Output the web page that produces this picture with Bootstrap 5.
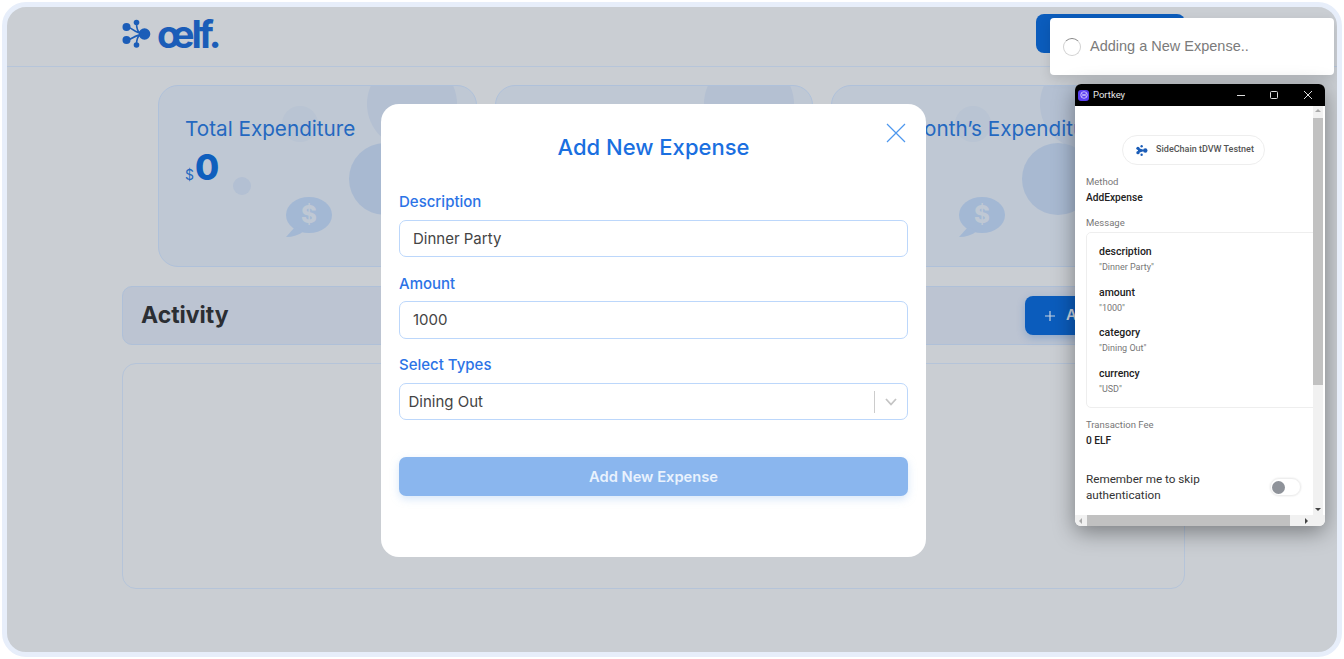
<!DOCTYPE html>
<html lang="en">
<head>
    <meta charset="UTF-8">
    <meta name="viewport" content="width=device-width, initial-scale=1.0">
    <title>Expense Tracker</title>
    <link href="https://cdn.jsdelivr.net/npm/bootstrap@5.3.2/dist/css/bootstrap.min.css" rel="stylesheet">
    <style>
        html, body { height: 100%; overflow: hidden; background: #fff; }
        body { font-family: Inter, "Noto Sans", sans-serif; }

        .app-frame {
            position: relative;
            margin: 2px;
            height: 655px;
            border: 5px solid #e7eefa;
            border-radius: 24px;
            background: #caced3;
            overflow: hidden;
        }
        .top-bar {
            height: 60px;
            padding: 0 152px 6px 114px;
            border-bottom: 1px solid #b6c5da;
        }
        .brand-logo { color: #1b5db8; }
        .brand-text {
            font-size: 38px;
            font-weight: 700;
            letter-spacing: -3px;
            line-height: 40px;
        }
        .top-btn {
            width: 149px;
            height: 39px;
            background: #0b5cbc;
            border-radius: 8px;
            border: 0;
        }
        .page-wrap { margin: 18px 152px 0 115px; }

        .stat-row { padding: 0 37px 0 36px; gap: 18px; }
        .stat-card {
            position: relative;
            flex: 0 0 318.5px;
            height: 182px;
            padding: 28px 26px;
            background: #bfc8d4;
            border: 1px solid #afc1da;
            border-radius: 20px;
            overflow: hidden;
        }
        .stat-title {
            position: relative;
            font-size: 20.7px;
            line-height: 30px;
            color: #2468c0;
        }
        .stat-value { position: relative; color: #0f5fbd; font-size: 35px; font-weight: 800; line-height: 46px; }
        .stat-value span { font-size: 14px; font-weight: 400; color: #2468c0; margin-right: 1px; }
        .blob { position: absolute; border-radius: 50%; }
        .blob-top { left: 208px; top: -27px; width: 90px; height: 90px; background: #b4c0d2; }
        .blob-big { left: 190px; top: 57px; width: 72px; height: 72px; background: #a8b9d1; }
        .blob-mid { left: 123px; top: 20px; width: 36px; height: 36px; background: #b9c4d3; }
        .blob-dot { left: 74px; top: 91px; width: 18px; height: 18px; background: #b3c0d3; }
        .bubble { position: absolute; left: 126px; top: 111px; }

        .activity-bar {
            height: 59px;
            margin-top: 19px;
            padding: 0 10px 0 18px;
            background: #bcc4d2;
            border: 1px solid #afc0d8;
            border-radius: 10px;
        }
        .activity-title { font-size: 23px; font-weight: 700; color: #2b2e33; }
        .add-btn {
            width: 149px;
            height: 39px;
            padding: 0 0 0 20px;
            gap: 11px;
            background: #0b5cbc;
            border: 0;
            border-radius: 8px;
            color: #c9d3e0;
            font-size: 15px;
            font-weight: 600;
            white-space: nowrap;
            box-shadow: 0 3px 8px rgba(11, 92, 188, .25);
        }
        .add-btn > * { flex-shrink: 0; }
        .activity-table {
            height: 226px;
            margin-top: 18px;
            border: 1px solid #b5c4d9;
            border-radius: 14px;
        }

        /* modal sits on the dimmed page */
        .expense-modal {
            position: absolute;
            left: 374px;
            top: 97px;
            width: 545px;
            height: 453px;
            padding: 25px 18px 0;
            background: #fff;
            border: 0;
            border-radius: 18px;
        }
        .modal-heading {
            margin: 0 0 26px;
            font-size: 22px;
            font-weight: 500;
            line-height: 36px;
            text-align: center;
            color: #1a6fe0;
        }
        .modal-x { position: absolute; right: 20px; top: 19px; background: none; border: 0; padding: 0; line-height: 0; }
        .field-label {
            display: block;
            margin-bottom: 6.5px;
            font-size: 15px;
            font-weight: 500;
            line-height: 22px;
            color: #2c73e6;
        }
        .field-box {
            height: 37.5px;
            margin-bottom: 15.5px;
            padding: 1px 13px 0;
            border: 1.5px solid #bcd7fb;
            border-radius: 7px;
            font-size: 15px;
            color: #444;
        }
        .select-box { padding: 1px 10px 0 8.5px; margin-bottom: 0; }
        .select-sep { width: 1px; height: 22px; background: #ccc; margin-right: 10px; }
        .submit-btn {
            width: 100%;
            height: 39px;
            margin-top: 37px;
            padding-top: 2px;
            background: #8ab6ee;
            border: 0;
            border-radius: 7px;
            color: #e9f2fd;
            font-size: 14.7px;
            font-weight: 600;
            box-shadow: 0 3px 8px rgba(138, 182, 238, .35);
        }

        .busy-toast {
            position: absolute;
            left: 1043px;
            top: 11px;
            width: 284px;
            height: 57px;
            padding-left: 13px;
            gap: 9px;
            background: #fff;
            border-radius: 4px;
            box-shadow: 0 4px 12px rgba(0, 0, 0, .12);
            font-family: "Liberation Sans", sans-serif;
            font-size: 14.5px;
            color: #7b7b7b;
        }
        .busy-toast span { padding-top: 1px; }
        .busy-spin {
            width: 18px;
            height: 18px;
            border: 1.5px solid #d2d2d2;
            border-top-color: #858585;
            border-radius: 50%;
        }

        .wallet-win {
            position: absolute;
            left: 1068px;
            top: 77px;
            width: 250px;
            height: 442px;
            background: #fff;
            border-radius: 6px;
            overflow: hidden;
            box-shadow: 0 6px 22px rgba(0, 0, 0, .4);
            font-family: Roboto, sans-serif;
        }
        .win-title {
            height: 22px;
            padding: 0 12px 0 3px;
            background: #000;
            color: #e8e8e8;
            font-size: 9.5px;
        }
        .win-icon { width: 11px; height: 11px; margin-right: 4px; border-radius: 3px; background: #5b3ff0; }
        .win-body { height: 409px; }
        .win-content { width: 238px; padding: 0 0 0 11px; overflow: hidden; }
        .chain-pill {
            width: 143px;
            height: 30px;
            margin: 29px 0 0 36px;
            padding-left: 3px;
            gap: 8px;
            border: 1px solid #eee;
            border-radius: 15px;
            font-size: 9px;
            font-weight: 500;
            color: #555;
            white-space: nowrap;
        }
        .meta-key { font-size: 9.5px; line-height: 12px; color: #777; }
        .meta-val { font-size: 10.2px; font-weight: 500; line-height: 14px; color: #222; margin-top: 3px; }
        .msg-box {
            width: 240px;
            height: 176px;
            margin-top: 3px;
            padding: 12px 12px;
            border: 1px solid #eee;
            border-radius: 5px;
        }
        .msg-key { font-size: 10.5px; font-weight: 500; line-height: 14px; color: #222; }
        .msg-val { font-size: 9px; line-height: 12px; margin: 2px 0 12.6px; color: #777; }
        .remember { font-size: 11.7px; line-height: 16px; color: #333; }
        .toggle-track {
            width: 31px;
            height: 18px;
            margin-right: 12px;
            padding-left: 1px;
            border: 1px solid #eee;
            border-radius: 9px;
            box-shadow: 0 0 2px rgba(0, 0, 0, .12);
        }
        .toggle-knob { width: 13px; height: 13px; border-radius: 50%; background: #8e9299; }
        .vscroll { position: relative; width: 10px; background: #f1f1f1; }
        .vscroll-thumb { height: 267px; margin-top: 12px; background: #c1c1c1; }
        .hscroll { position: relative; height: 11px; padding: 0 12px; background: #f1f1f1; }
        .hscroll-thumb { width: 203px; height: 100%; background: #c1c1c1; }
        .scroll-arrow { position: absolute; width: 0; height: 0; border: 3px solid transparent; }
        .arrow-up { left: 2px; top: 3px; border-top: 0; border-bottom-color: #aaa; }
        .arrow-down { left: 2px; bottom: 4px; border-bottom: 0; border-top-color: #444; }
        .arrow-left { left: 4px; top: 3px; border-left: 0; border-right-color: #aaa; }
        .arrow-right { right: 17px; top: 3px; border-right: 0; border-left-color: #444; }
    </style>
</head>
<body>
    <div class="app-frame">
        <!-- top bar -->
        <nav class="top-bar d-flex align-items-center justify-content-between">
            <div class="brand-logo d-flex align-items-center gap-1">
                <svg width="32" height="30" viewBox="0 0 32 30" fill="#1b5db8" stroke="#1b5db8" stroke-width="0">
                    <circle cx="5.5" cy="8" r="4"/><circle cx="5.5" cy="21" r="4"/>
                    <circle cx="15.5" cy="3.5" r="2.8"/><circle cx="15.5" cy="26" r="2.8"/>
                    <circle cx="23.5" cy="15" r="5.8"/>
                    <path d="M5.5 8 C12 8 12 14 23 14.5 M5.5 21 C12 21 12 15.5 23 15.2 M15.5 3.5 C15.5 9 16.5 12.5 19 14 M15.5 26 C15.5 20 16.5 17.5 19 16" fill="none" stroke-width="1.6"/>
                </svg>
                <span class="brand-text">œlf.</span>
            </div>
            <button class="top-btn" type="button"></button>
        </nav>

        <main class="page-wrap">
            <div class="stat-row d-flex">
                <div class="stat-card">
                    <div class="blob blob-top"></div><div class="blob blob-big"></div><div class="blob blob-mid"></div><div class="blob blob-dot"></div>
                    <svg class="bubble" width="48" height="42" viewBox="0 0 48 42">
                        <ellipse cx="24" cy="18" rx="23" ry="18" fill="#a3b8d4"/>
                        <path d="M10 30 L1 40 C8 40 14 38 19 34Z" fill="#a3b8d4"/>
                        <text x="24" y="26" text-anchor="middle" font-size="24" font-weight="800" fill="#bfc8d4">$</text>
                    </svg>
                    <div class="stat-title">Total Expenditure</div>
                    <div class="stat-value"><span>$</span>0</div>
                </div>
                <div class="stat-card">
                    <div class="blob blob-top"></div><div class="blob blob-big"></div><div class="blob blob-mid"></div><div class="blob blob-dot"></div>
                </div>
                <div class="stat-card">
                    <div class="blob blob-top"></div><div class="blob blob-big"></div><div class="blob blob-mid"></div><div class="blob blob-dot"></div>
                    <svg class="bubble" width="48" height="42" viewBox="0 0 48 42">
                        <ellipse cx="24" cy="18" rx="23" ry="18" fill="#a3b8d4"/>
                        <path d="M10 30 L1 40 C8 40 14 38 19 34Z" fill="#a3b8d4"/>
                        <text x="24" y="26" text-anchor="middle" font-size="24" font-weight="800" fill="#bfc8d4">$</text>
                    </svg>
                    <div class="stat-title text-nowrap">This Month’s Expenditure</div>
                    <div class="stat-value"><span>$</span>0</div>
                </div>
            </div>

            <div class="activity-bar d-flex align-items-center justify-content-between">
                <span class="activity-title">Activity</span>
                <button class="add-btn d-flex align-items-center" type="button">
                    <svg width="10" height="10" viewBox="0 0 10 10" stroke="#c9d3e0" stroke-width="1.2"><path d="M5 0 V10 M0 5 H10"/></svg>
                    <span>Add New Expense</span>
                </button>
            </div>
            <div class="activity-table"></div>
        </main>

        <!-- add expense modal -->
        <div class="modal-content expense-modal">
            <button class="modal-x" type="button" aria-label="Close">
                <svg width="20" height="20" viewBox="0 0 20 20" stroke="#4d97ee" stroke-width="1.2" fill="none"><path d="M1 1 L19 19 M19 1 L1 19"/></svg>
            </button>
            <h2 class="modal-heading">Add New Expense</h2>
            <label class="field-label">Description</label>
            <div class="field-box d-flex align-items-center">Dinner Party</div>
            <label class="field-label">Amount</label>
            <div class="field-box d-flex align-items-center">1000</div>
            <label class="field-label">Select Types</label>
            <div class="field-box select-box d-flex align-items-center">
                <span class="flex-grow-1">Dining Out</span>
                <span class="select-sep"></span>
                <svg width="12" height="8" viewBox="0 0 12 8" stroke="#c4c4c4" stroke-width="1.8" fill="none"><path d="M1 1 L6 6.5 L11 1"/></svg>
            </div>
            <button class="submit-btn" type="button">Add New Expense</button>
        </div>

        <!-- toast -->
        <div class="busy-toast d-flex align-items-center">
            <div class="busy-spin"></div>
            <span>Adding a New Expense..</span>
        </div>

        <!-- wallet popup -->
        <div class="wallet-win d-flex flex-column">
            <div class="win-title d-flex align-items-center">
                <span class="win-icon d-flex align-items-center justify-content-center">
                    <svg width="8" height="8" viewBox="0 0 8 8" fill="none" stroke="#d9d2ff" stroke-width=".8"><circle cx="4" cy="4" r="3.3"/><path d="M1.2 2.5 L6.8 5.5 M1.2 5.5 L6.8 2.5"/></svg>
                </span>
                <span class="flex-grow-1">Portkey</span>
                <svg width="76" height="10" viewBox="0 0 76 10" stroke="#ddd" stroke-width="1" fill="none">
                    <path d="M0 5.5 H8"/>
                    <rect x="33.5" y="1.5" width="7" height="7" rx="1"/>
                    <path d="M67 1 L75 9 M75 1 L67 9"/>
                </svg>
            </div>
            <div class="win-body d-flex">
                <div class="win-content">
                    <div class="chain-pill d-flex align-items-center justify-content-center">
                        <svg width="12" height="11" viewBox="0 0 32 30" fill="#1b5db8">
                            <circle cx="5" cy="9" r="4.5"/><circle cx="5" cy="21" r="4.5"/>
                            <circle cx="15" cy="3.5" r="3.2"/><circle cx="15" cy="26.5" r="3.2"/>
                            <circle cx="25" cy="15" r="6"/>
                            <path d="M5 8 L25 14 V16 L5 22Z"/>
                        </svg>
                        <span>SideChain tDVW Testnet</span>
                    </div>
                    <div class="meta-key" style="margin-top:11px">Method</div>
                    <div class="meta-val">AddExpense</div>
                    <div class="meta-key" style="margin-top:12px">Message</div>
                    <div class="msg-box">
                        <div class="msg-key">description</div><div class="msg-val">"Dinner Party"</div>
                        <div class="msg-key">amount</div><div class="msg-val">"1000"</div>
                        <div class="msg-key">category</div><div class="msg-val">"Dining Out"</div>
                        <div class="msg-key">currency</div><div class="msg-val">"USD"</div>
                    </div>
                    <div class="meta-key" style="margin-top:11px">Transaction Fee</div>
                    <div class="meta-val">0 ELF</div>
                    <div class="d-flex align-items-center justify-content-between" style="margin-top:23px">
                        <div class="remember">Remember me to skip<br>authentication</div>
                        <div class="toggle-track d-flex align-items-center"><div class="toggle-knob"></div></div>
                    </div>
                </div>
                <div class="vscroll">
                    <span class="scroll-arrow arrow-up"></span>
                    <div class="vscroll-thumb"></div>
                    <span class="scroll-arrow arrow-down"></span>
                </div>
            </div>
            <div class="hscroll d-flex align-items-center">
                <span class="scroll-arrow arrow-left"></span>
                <div class="hscroll-thumb"></div>
                <span class="scroll-arrow arrow-right"></span>
            </div>
        </div>
    </div>

    <script src="https://cdn.jsdelivr.net/npm/bootstrap@5.3.2/dist/js/bootstrap.bundle.min.js"></script>
</body>
</html>
